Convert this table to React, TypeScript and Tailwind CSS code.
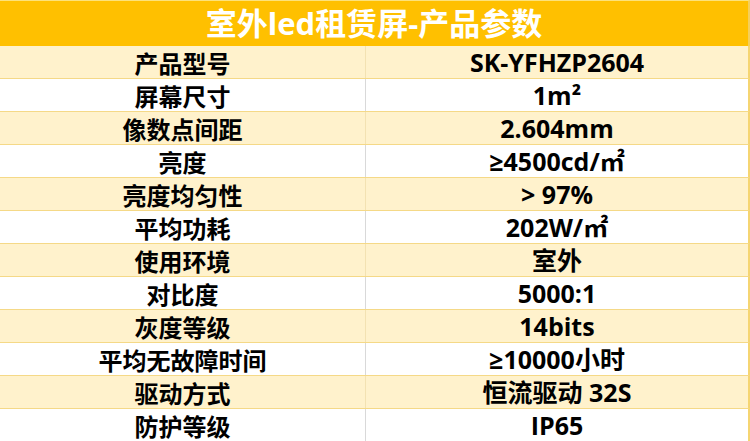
import React from "react";

const rows: [string, string][] = [
  ["产品型号", "SK-YFHZP2604"],
  ["屏幕尺寸", "1m²"],
  ["像数点间距", "2.604mm"],
  ["亮度", "≥4500cd/㎡"],
  ["亮度均匀性", "> 97%"],
  ["平均功耗", "202W/㎡"],
  ["使用环境", "室外"],
  ["对比度", "5000:1"],
  ["灰度等级", "14bits"],
  ["平均无故障时间", "≥10000小时"],
  ["驱动方式", "恒流驱动 32S"],
  ["防护等级", "IP65"],
];

export default function App() {
  return (
    <div className="w-[750px] h-[441px] overflow-hidden bg-white flex flex-col font-['Noto_Sans_CJK_SC',sans-serif]">
      <div className="h-[46px] shrink-0 bg-[#ffc000] border-t border-[#fde27a] border-r-2 border-r-[#f5cf5a] flex items-center justify-center text-white font-bold text-[31px] leading-none font-['Open_Sans','Noto_Sans_CJK_SC',sans-serif]">
        室外led租赁屏-产品参数
      </div>
      {rows.map(([k, v], i) => {
        const yellow = i % 2 === 0;
        return (
          <div
            key={k}
            className={
              "h-[33px] shrink-0 flex border-b border-[#f5d987] border-r-2 border-r-[#f5d572] " +
              (yellow ? "bg-[#fff2cc]" : "bg-white")
            }
          >
            <div
              className={
                "w-[366px] shrink-0 flex items-center justify-center pt-px text-black font-bold text-[24px] leading-none border-r " +
                (yellow ? "border-[#f3e2b2]" : "border-[#d9d9d9]")
              }
            >
              {k}
            </div>
            <div className="flex-1 flex items-center justify-center pt-px text-black font-bold text-[25px] leading-none font-['Open_Sans','DejaVu_Sans','Noto_Sans_CJK_SC',sans-serif]">
              {v}
            </div>
          </div>
        );
      })}
    </div>
  );
}
